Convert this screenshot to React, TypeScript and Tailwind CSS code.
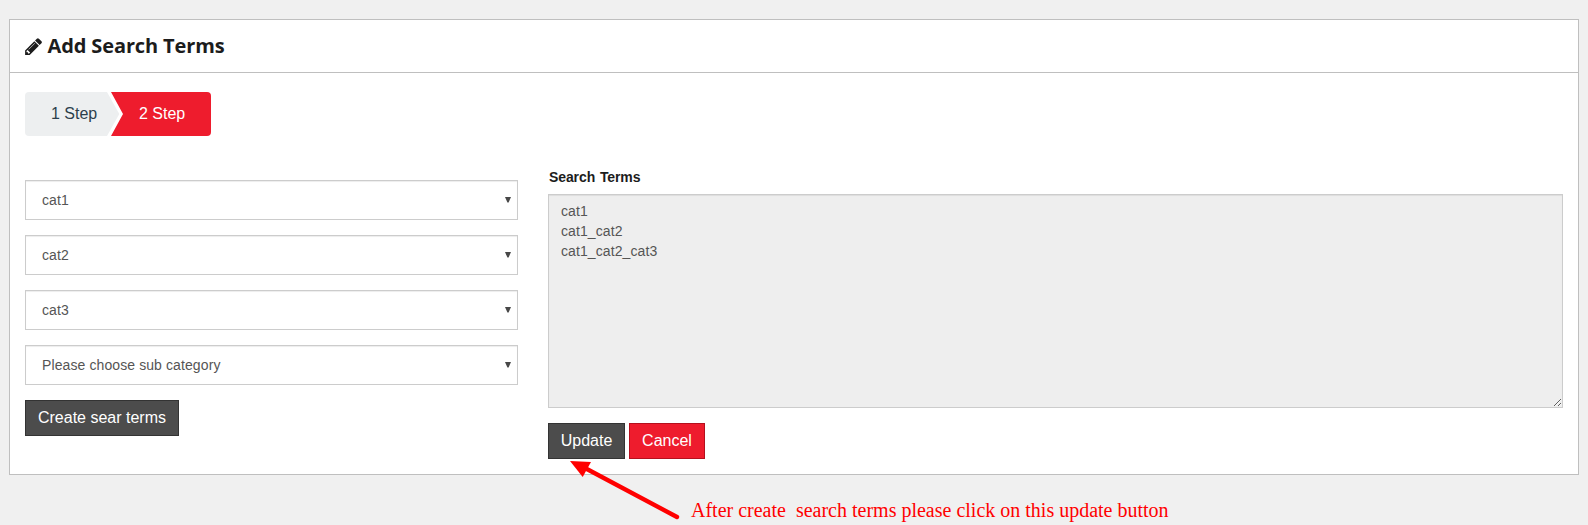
const selects = ['cat1', 'cat2', 'cat3', 'Please choose sub category'];

function PencilIcon() {
  return (
    <svg width="17" height="17" viewBox="0 0 1515 1536" fill="currentColor">
      <path d="M363 1408l91-91-235-235-91 91v107h128v128h107zM886 480q0-22-22-22-10 0-17 7l-542 542q-7 7-7 17 0 22 22 22 10 0 17-7l542-542q7-7 7-17zM832 288l416 416-832 832h-416v-416zM1515 384q0 53-37 90l-166 166-416-416 166-165q36-38 90-38 53 0 91 38l235 234q37 39 37 91z" />
    </svg>
  );
}

function Select({ value }: { value: string }) {
  return (
    <div className="flex h-10 items-center justify-between border border-[#cccccc] bg-white pl-4 pr-[6px] text-sm tracking-[0.1px] text-[#555555] shadow-[inset_0_1px_1px_rgba(0,0,0,0.075)]">
      <span>{value}</span>
      <svg width="6" height="6" viewBox="0 0 6 6">
        <path d="M0 0h6L3.6 5.6H2.4z" fill="#484848" />
      </svg>
    </div>
  );
}

export default function App() {
  return (
    <div className="relative h-[525px] w-full overflow-hidden bg-[#f0f0f0] pl-[9px] pr-[9px] pt-[19px] font-['Liberation_Sans',Arial,sans-serif]">
      <section className="h-[456px] border border-[#bfbfbf] bg-white">
        <header className="flex h-[53px] items-center border-b border-[#bfbfbf] pl-[15px] text-[#1c1c1c]">
          <PencilIcon />
          <h1 className="ml-[5.5px] whitespace-nowrap font-['Open_Sans',sans-serif] text-xl font-bold leading-7 tracking-[-0.12px]">Add Search Terms</h1>
        </header>
        <div className="px-[15px] pt-[19px]">
          <nav className="flex h-11 w-[186px] text-base leading-[44px]">
            <div className="w-[82px] whitespace-nowrap rounded-l bg-[#edeff0] pl-[26px] text-[#2c3f4c]">1 Step</div>
            <svg width="16" height="44" viewBox="0 0 16 44" className="shrink-0">
              <path d="M0 0L12.3 22L0 44z" fill="#edeff0" />
              <path d="M4 0L16 22L4 44H16V0z" fill="#ee1c2d" />
            </svg>
            <div className="flex-1 rounded-r bg-[#ee1c2d] pl-4 text-white">2 Step</div>
          </nav>
          <div className="flex gap-[30px]">
            <div className="flex w-[493px] flex-col gap-[15px] pt-11">
              {selects.map((s) => <Select key={s} value={s} />)}
              <button className="h-9 w-[154px] whitespace-nowrap border border-[#333333] bg-[#4c4c4c] text-base text-white">Create sear terms</button>
            </div>
            <div className="flex-1 pt-[31px]">
              <label className="block h-[27px] pl-px text-sm font-bold leading-5 tracking-[-0.1px] text-[#1c1c1c] [word-spacing:1px]">Search Terms</label>
              <textarea
                readOnly
                className="block h-[214px] w-full resize border border-[#cccccc] bg-[#eeeeee] px-3 py-[6px] text-sm leading-5 tracking-[0.1px] text-[#555555] shadow-[inset_0_1px_1px_rgba(0,0,0,0.075)] outline-none"
                value={'cat1\ncat1_cat2\ncat1_cat2_cat3'}
              />
              <div className="mt-[15px] flex gap-1">
                <button className="h-9 w-[77px] border border-[#333333] bg-[#4c4c4c] text-base text-white">Update</button>
                <button className="h-9 w-[76px] border border-[#b5101e] bg-[#ee1c2d] text-base text-white">Cancel</button>
              </div>
            </div>
          </div>
        </div>
      </section>
      <svg className="absolute left-[560px] top-[455px]" width="130" height="70" viewBox="0 0 130 70">
        <path d="M24 12.5L117 62" stroke="#ff0000" strokeWidth="4.4" strokeLinecap="round" />
        <path d="M10 6L31 7L22.7 22z" fill="#ff0000" />
      </svg>
      <p className="absolute left-[691px] top-[498px] whitespace-pre font-['Liberation_Serif',serif] text-xl leading-6 text-[#ff0000]">After create  search terms please click on this update button</p>
    </div>
  );
}
